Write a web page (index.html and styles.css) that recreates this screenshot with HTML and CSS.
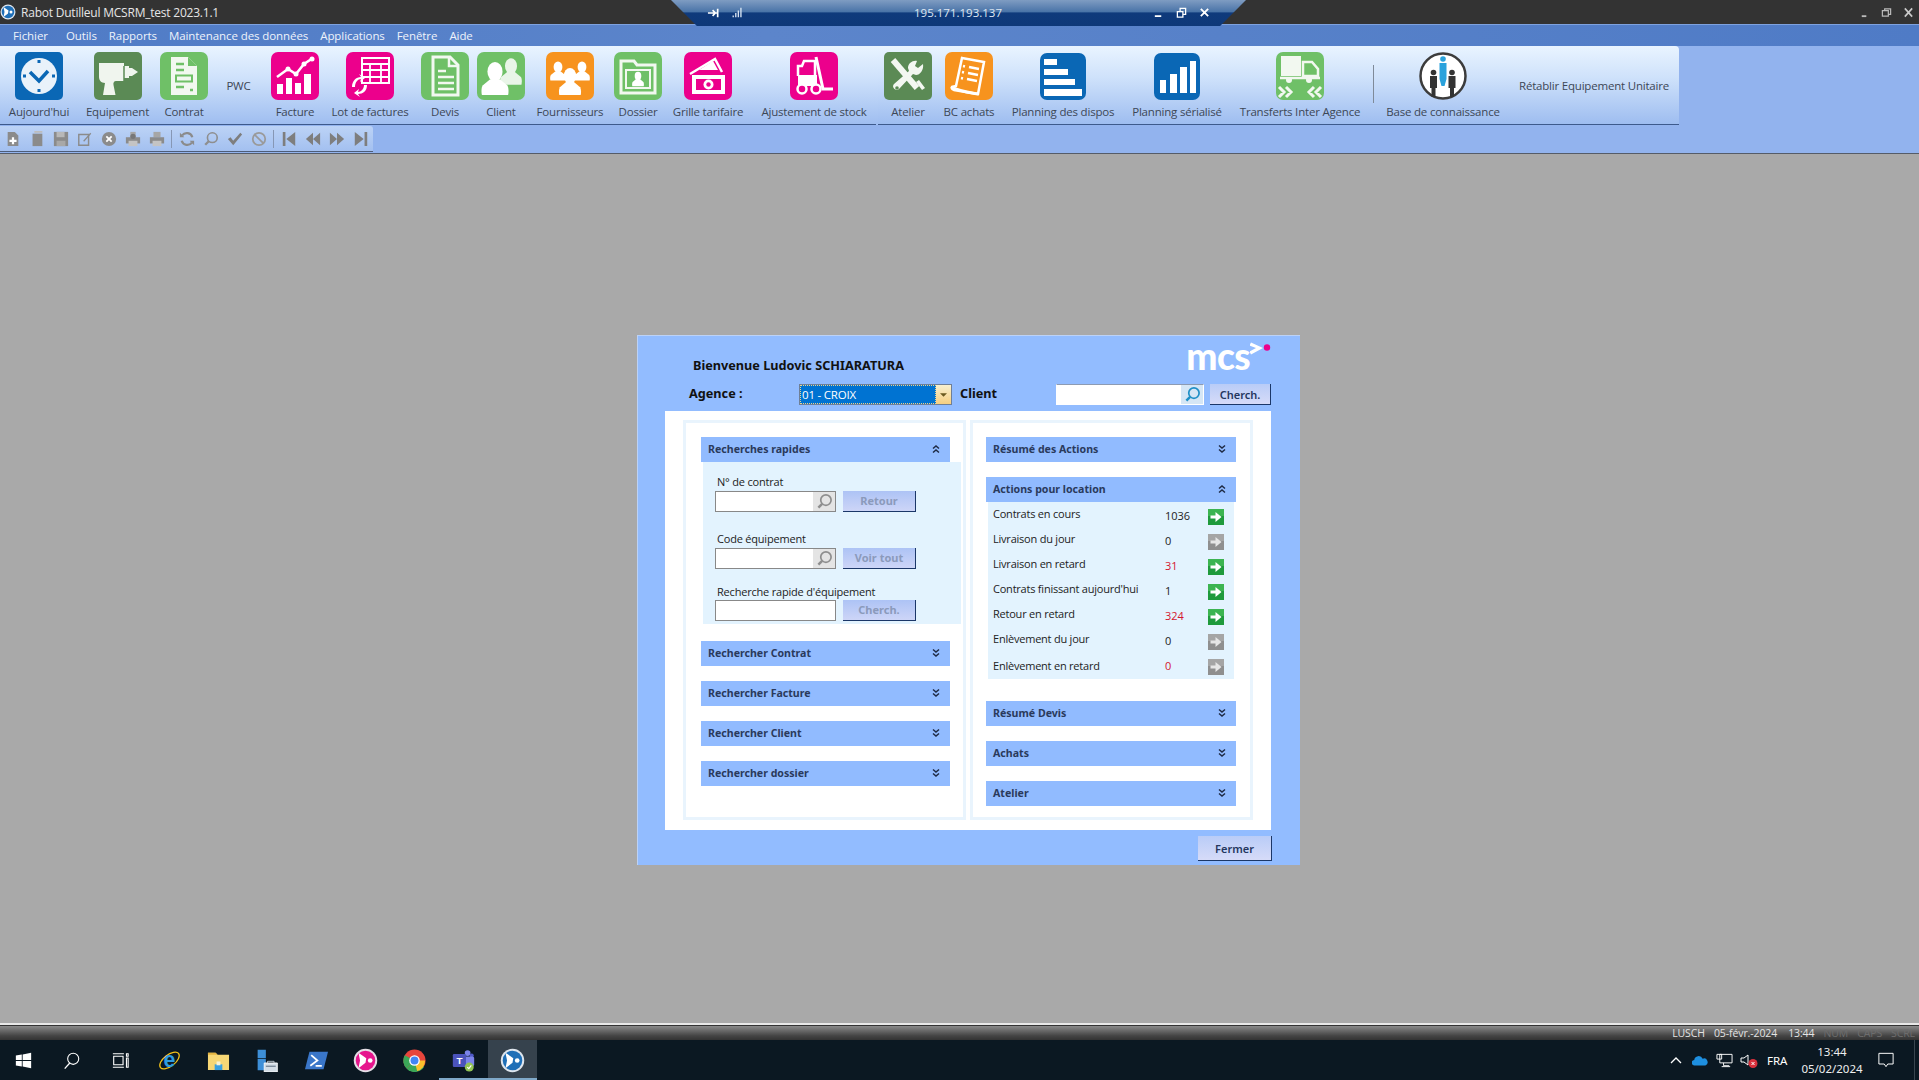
FILE: index.html
```html
<!DOCTYPE html>
<html lang="fr">
<head>
<meta charset="utf-8">
<title>Rabot Dutilleul MCSRM_test 2023.1.1</title>
<link rel="stylesheet" href="styles.css">
</head>
<body>
<svg class="defs" aria-hidden="true">
  <symbol id="chev-down" viewBox="0 0 10 10"><path d="M2 1.500 5 4l3-2.500M2 5.500 5 8l3-2.500" fill="none" stroke="#1e2a44" stroke-width="1.500"/></symbol>
  <symbol id="chev-up" viewBox="0 0 10 10"><path d="M2 4.500 5 2l3 2.500M2 8.500 5 6l3 2.500" fill="none" stroke="#1e2a44" stroke-width="1.500"/></symbol>
  <symbol id="arrow-on" viewBox="0 0 16 16"><rect width="16" height="16" fill="#1f9a3c"/><rect width="16" height="7" fill="#3cb451"/><path d="M2.500 6.500h5V3l6 5-6 5V9.500h-5z" fill="#fff"/></symbol>
  <symbol id="arrow-off" viewBox="0 0 16 16"><rect width="16" height="16" fill="#8f8f8f"/><rect width="16" height="7" fill="#a5a5a5"/><path d="M2.500 6.500h5V3l6 5-6 5V9.500h-5z" fill="#e6e6e6"/></symbol>
  <symbol id="lens-grey" viewBox="0 0 18 18"><circle cx="10.500" cy="7.500" r="5.500" fill="none" stroke="#8e8e8e" stroke-width="1.800"/><path d="M6.500 11.500 2.500 15.500" stroke="#8e8e8e" stroke-width="2.600"/></symbol>
  <symbol id="lens-blue" viewBox="0 0 18 18"><circle cx="10.500" cy="7.500" r="5.500" fill="none" stroke="#1f8fc6" stroke-width="1.800"/><path d="M6.500 11.500 2.500 15.500" stroke="#1f8fc6" stroke-width="2.600"/></symbol>
  <symbol id="bust" viewBox="0 0 20 24"><ellipse cx="10" cy="7" rx="5.500" ry="7" fill="#fff"/><path d="M6.500 12.500 1 17c-1 1.500-1 5-.5 7h19c.5-2 .5-5.500-.5-7l-5.500-4.500z" fill="#fff"/></symbol>
  <symbol id="mcs-mark" viewBox="0 0 32 32"><circle cx="16" cy="16" r="15" fill="#dfe6ee"/><circle cx="16" cy="16" r="12.500" fill="#1f6fb7"/><path d="M7 6 17 13l-1 6-9 7 2-10z" fill="#fff"/><circle cx="22" cy="16" r="3" fill="#fff"/></symbol>
  <symbol id="mcs-pink" viewBox="0 0 32 32"><circle cx="16" cy="16" r="15" fill="#e5dfe6"/><circle cx="16" cy="16" r="12.500" fill="#e6168d"/><path d="M7 6 17 13l-1 6-9 7 2-10z" fill="#fff"/><circle cx="22" cy="16" r="3" fill="#fff"/></symbol>
</svg>

<div class="app">
  <header class="titlebar">
    <div class="title-left">
      <svg class="app-logo" viewBox="0 0 32 32"><use href="#mcs-mark"/></svg>
      <span>Rabot Dutilleul MCSRM_test 2023.1.1</span>
    </div>
    <div class="win-controls">
      <svg viewBox="0 0 12 12"><path d="M3 10h5" stroke="#bbb" stroke-width="2"/></svg>
      <svg viewBox="0 0 12 12"><path d="M1.500 4h6.500v6H1.500zM4 4V2h6.500v6H8" fill="none" stroke="#bbb" stroke-width="1.300"/></svg>
      <svg viewBox="0 0 12 12"><path d="M2 1.500l8 9M10 1.500l-8 9" stroke="#c9c9c9" stroke-width="1.800"/></svg>
    </div>
  </header>

  <div class="remote-bar">
    <div class="remote-pin">
      <svg viewBox="0 0 14 12"><path d="M1 6h11M11.500 1.500v9M6 3 9 6 6 9" fill="none" stroke="#fff" stroke-width="1.800"/></svg>
      <svg viewBox="0 0 14 14"><path d="M2 12v-2M5 12V7M8 12V4M11 12V1" stroke="#d7e3f2" stroke-width="1.600"/></svg>
    </div>
    <span class="remote-ip">195.171.193.137</span>
    <div class="remote-ctrl">
      <svg viewBox="0 0 12 12"><path d="M2 10h7" stroke="#fff" stroke-width="2"/></svg>
      <svg viewBox="0 0 12 12"><path d="M1.500 5h6v6h-6zM4.500 5V1.500h6V8H8" fill="none" stroke="#fff" stroke-width="1.400"/></svg>
      <svg viewBox="0 0 12 12"><path d="M2 2l8 8M10 2l-8 8" stroke="#fff" stroke-width="2"/></svg>
    </div>
  </div>

  <nav class="menubar">
    <span class="menu-file">Fichier</span><span>Outils</span><span>Rapports</span><span>Maintenance des données</span><span>Applications</span><span>Fenêtre</span><span>Aide</span>
  </nav>

  <div class="ribbon">
    <div class="ribbon-group group-a">
      <div class="rb-item"><svg class="rb-icon" viewBox="0 0 48 48"><rect width="48" height="48" rx="5" fill="#0a67b5"/><circle cx="24" cy="24" r="18" fill="#e9f2fa"/><path d="M15 20l9 9 9-10" fill="none" stroke="#0a67b5" stroke-width="3.500"/><path d="M24 8v3M24 37v3M8 24h3M37 24h3" stroke="#0a67b5" stroke-width="3"/></svg><span>Aujourd'hui</span></div>
      <div class="rb-item"><svg class="rb-icon" viewBox="0 0 48 48"><rect width="48" height="48" rx="5" fill="#5b8a55"/><path d="M5 11h25v3h5v2h3l6 4-6 4h-3v2h-5v3H22c-2 0-3 2-2.500 4l2 10H9l2-12c-4 0-6-3-6-6z" fill="#f0f5ee"/><path d="M30 14v15" stroke="#5b8a55" stroke-width="1.500"/></svg><span>Equipement</span></div>
      <div class="rb-item"><svg class="rb-icon" viewBox="0 0 48 48"><rect width="48" height="48" rx="7" fill="#6fc067"/><path d="M11 5h17l9 9v29H11z" fill="#f2f8f0"/><path d="M28 5v9h9" fill="#6fc067"/><path d="M16 12h8M16 18h8M16 35h8M30 38h3" stroke="#6fc067" stroke-width="2.500"/><rect x="16" y="23.500" width="16" height="6" fill="none" stroke="#6fc067" stroke-width="2"/></svg><span>Contrat</span></div>
      <div class="rb-text">PWC</div>
      <div class="rb-item"><svg class="rb-icon" viewBox="0 0 48 48"><rect width="48" height="48" rx="7" fill="#ec008c"/><path d="M6 25l11-8 8 5 8-10 9-6" fill="none" stroke="#fff" stroke-width="2.500"/><circle cx="17" cy="17" r="2.500" fill="#fff"/><circle cx="25" cy="22" r="2.500" fill="#fff"/><circle cx="33" cy="12" r="2.500" fill="#fff"/><circle cx="41" cy="7" r="2.500" fill="#fff"/><path d="M6 32h6v10H6zM15 26h6v16h-6zM24 31h6v11h-6zM33 22h7v20h-7z" fill="#fff"/></svg><span>Facture</span></div>
      <div class="rb-item"><svg class="rb-icon" viewBox="0 0 48 48"><rect width="48" height="48" rx="7" fill="#ec008c"/><rect x="16" y="6" width="27" height="25" fill="none" stroke="#fff" stroke-width="2"/><path d="M16 12h27M16 18h27M16 25h27M24 12v19M35 12v19" stroke="#fff" stroke-width="1.800"/><path d="M6 35c0-6 4-10 9-10l-2-3 6 4-5 4 1-3c-3 0-6 3-6 8zM21 33c0 6-4 9-9 9l2 3-6-4 5-4-1 3c3 0 6-3 6-7z" fill="#fff"/></svg><span>Lot de factures</span></div>
      <div class="rb-item"><svg class="rb-icon" viewBox="0 0 48 48"><rect width="48" height="48" rx="7" fill="#6fc067"/><path d="M12 5h17l8 8v30H12z" fill="none" stroke="#f2f8f0" stroke-width="3"/><path d="M28 5v9h9" fill="none" stroke="#f2f8f0" stroke-width="2.500"/><path d="M17 19h8M17 25h16M17 31h16M17 37h16" stroke="#f2f8f0" stroke-width="2.500"/></svg><span>Devis</span></div>
      <div class="rb-item"><svg class="rb-icon" viewBox="0 0 48 48"><rect width="48" height="48" rx="7" fill="#6fc067"/><use href="#bust" x="23" y="6" width="22" height="27" opacity=".85"/><use href="#bust" x="4" y="10" width="28" height="33"/></svg><span>Client</span></div>
      <div class="rb-item"><svg class="rb-icon" viewBox="0 0 48 48"><rect width="48" height="48" rx="7" fill="#f7931e"/><use href="#bust" x="4" y="8" width="16" height="22"/><use href="#bust" x="28" y="8" width="16" height="22"/><use href="#bust" x="12" y="16" width="24" height="27"/></svg><span>Fournisseurs</span></div>
      <div class="rb-item"><svg class="rb-icon" viewBox="0 0 48 48"><rect width="48" height="48" rx="7" fill="#6fc067"/><path d="M7 9h13l3 4h18v28H7z" fill="none" stroke="#f2f8f0" stroke-width="3"/><path d="M12 18h24v18H12z" fill="none" stroke="#f2f8f0" stroke-width="2"/><use href="#bust" x="18" y="19" width="12" height="16"/></svg><span>Dossier</span></div>
      <div class="rb-item"><svg class="rb-icon" viewBox="0 0 48 48"><rect width="48" height="48" rx="7" fill="#ec008c"/><path d="M6 22 31 7l7 13" fill="none" stroke="#fff" stroke-width="2.500"/><path d="M15 18l14-9 5 9z" fill="#fff"/><rect x="8" y="23" width="33" height="19" fill="#fff"/><rect x="12" y="27" width="25" height="11" fill="#ec008c"/><circle cx="24.500" cy="32.500" r="5" fill="#fff"/><circle cx="24.500" cy="32.500" r="2.200" fill="#ec008c"/></svg><span>Grille tarifaire</span></div>
      <div class="rb-item"><svg class="rb-icon" viewBox="0 0 48 48"><rect width="48" height="48" rx="7" fill="#ec008c"/><path d="M8 24V14h4l2-5h11v15" fill="none" stroke="#fff" stroke-width="2.500"/><path d="M8 23h19v11H8z" fill="#fff"/><path d="M26 5 33 37h10" fill="none" stroke="#fff" stroke-width="3"/><circle cx="12" cy="37" r="4.500" fill="#ec008c" stroke="#fff" stroke-width="2.500"/><circle cx="26" cy="37" r="4.500" fill="#ec008c" stroke="#fff" stroke-width="2.500"/></svg><span>Ajustement de stock</span></div>
    </div>
    <div class="ribbon-group group-b">
      <div class="rb-item"><svg class="rb-icon" viewBox="0 0 48 48"><rect width="48" height="48" rx="5" fill="#5b8a55"/><path d="M9 8 33 36" stroke="#f3f7f1" stroke-width="6"/><path d="M38 38l-6-8 3-2 6 8z" fill="#f3f7f1"/><path d="M39 12l-5 4-3-2 2-5c-4-1-9 2-9 7l1 3-15 13c-3 3 2 8 5 5l14-15 3 1c4 0 8-5 7-11z" fill="#f3f7f1"/><circle cx="13" cy="36" r="1.800" fill="#5b8a55"/></svg><span>Atelier</span></div>
      <div class="rb-item"><svg class="rb-icon" viewBox="0 0 48 48"><rect width="48" height="48" rx="7" fill="#f7931e"/><path d="M17 6l22 4-6 32-24-4c-2-1-3-2-2-3l4-1z" fill="none" stroke="#fff" stroke-width="2.500"/><path d="M7 35c6 4 14 5 26 7" fill="none" stroke="#fff" stroke-width="3"/><path d="M24 15l10 2M23 21l10 2M22 27l10 2" stroke="#fff" stroke-width="2.500"/><path d="M18 14l2 .5M17 20l2 .5M16 26l2 .5" stroke="#fff" stroke-width="2.500"/></svg><span>BC achats</span></div>
      <div class="rb-item"><svg class="rb-icon rb-round" viewBox="0 0 46 47"><rect width="46" height="47" rx="7" fill="#0a67b5"/><path d="M4 6h13v6H4zM4 16h24v6H4zM4 26h31v6H4zM4 36h38v7H4z" fill="#fff"/></svg><span>Planning des dispos</span></div>
      <div class="rb-item"><svg class="rb-icon rb-round" viewBox="0 0 46 47"><rect width="46" height="47" rx="7" fill="#0a67b5"/><path d="M6 27h6v13H6zM16 21h7v19h-7zM26 14h7v26h-7zM36 8h6v32h-6z" fill="#fff"/></svg><span>Planning sérialisé</span></div>
      <div class="rb-item"><svg class="rb-icon" viewBox="0 0 48 48"><rect width="48" height="48" rx="7" fill="#6fc067"/><path d="M5 4h20v20H5z" fill="#f2f8f0"/><path d="M27 10h9l6 7v7H27z" fill="none" stroke="#f2f8f0" stroke-width="2.500"/><path d="M4 26h40" stroke="#f2f8f0" stroke-width="2.500"/><circle cx="13" cy="28" r="3" fill="#f2f8f0"/><circle cx="33" cy="28" r="3" fill="#f2f8f0"/><path d="M3 35l5 5-5 5M10 35l5 5-5 5M45 35l-5 5 5 5M38 35l-5 5 5 5" fill="none" stroke="#f2f8f0" stroke-width="3"/></svg><span>Transferts Inter Agence</span></div>
      <div class="rb-sep"></div>
      <div class="rb-item"><svg class="rb-icon" viewBox="0 0 48 48"><circle cx="24" cy="24" r="22.500" fill="#fff" stroke="#3c3c3c" stroke-width="2.500"/><circle cx="24" cy="7" r="2.800" fill="#2aa2dc"/><path d="M20.500 11h7v16l-2 7h-3l-2-7z" fill="#2aa2dc"/><circle cx="14.500" cy="20.500" r="2.800" fill="#333"/><path d="M11 24h7v12h-1.500v9h-4v-9H11z" fill="#333"/><circle cx="33" cy="20.500" r="2.800" fill="#333"/><path d="M29.500 24h7v12H35v9h-4v-9h-1.500z" fill="#333"/></svg><span>Base de connaissance</span></div>
      <div class="rb-text">Rétablir Equipement Unitaire</div>
    </div>
  </div>

  <div class="toolstrip">
    <div class="toolbar">
      <svg viewBox="0 0 18 18"><path d="M3 1h8l4 4v12H3z" fill="#8b8b8b"/><path d="M9 7v8M5 11h8" stroke="#fff" stroke-width="2.500"/></svg>
      <svg viewBox="0 0 18 18"><path d="M4 3h11v14H4z" fill="#8b8b8b"/><path d="M6 1h9" stroke="#bdbdbd" stroke-width="2"/></svg>
      <svg viewBox="0 0 18 18"><path d="M1 1h16v16H1z" fill="#8b8b8b"/><path d="M4 1h9v6H4z" fill="#b8b8b8"/><path d="M4 11h10v6H4z" fill="#a8a8a8"/></svg>
      <svg viewBox="0 0 18 18"><path d="M2 4h11v12H2z" fill="none" stroke="#8b8b8b" stroke-width="1.600"/><path d="M7 11l1 1 8-9-1-1z" fill="#8b8b8b"/></svg>
      <svg viewBox="0 0 18 18"><circle cx="9" cy="9" r="8" fill="#8b8b8b"/><path d="M6 6l6 6M12 6l-6 6" stroke="#fff" stroke-width="2"/></svg>
      <svg viewBox="0 0 18 18"><path d="M6 1h6v6H6z" fill="#a6a6a6"/><path d="M1 7h16v7H1z" fill="#8b8b8b"/><path d="M4 11h10v6H4z" fill="#c4c4c4"/><circle cx="9" cy="6" r="3" fill="#777"/></svg>
      <svg viewBox="0 0 18 18"><path d="M5 1h8v6H5z" fill="#a6a6a6"/><path d="M1 7h16v7H1z" fill="#8b8b8b"/><path d="M4 11h10v6H4z" fill="#c4c4c4"/></svg>
      <i class="tb-sep"></i>
      <svg viewBox="0 0 18 18"><path d="M15 7A6.500 6.500 0 0 0 3.500 5M3 11a6.500 6.500 0 0 0 11.500 2" fill="none" stroke="#8b8b8b" stroke-width="2.500"/><path d="M1 2l5 5H1zM17 16l-5-5h5z" fill="#8b8b8b"/></svg>
      <svg viewBox="0 0 18 18"><use href="#lens-grey"/></svg>
      <svg viewBox="0 0 18 18"><path d="M1 9l3-2 3 4 8-9 2 2-10 12z" fill="#7e7e7e"/></svg>
      <svg viewBox="0 0 18 18"><circle cx="9" cy="9" r="7" fill="none" stroke="#9a9a9a" stroke-width="2"/><path d="M4 4l10 10" stroke="#9a9a9a" stroke-width="2"/></svg>
      <i class="tb-sep"></i>
      <svg viewBox="0 0 18 18"><path d="M2 1h3v16H2zM16 1v16L6 9z" fill="#7e7e7e"/></svg>
      <svg viewBox="0 0 18 18"><path d="M9 2v14L1 9zM17 2v14L9 9z" fill="#7e7e7e"/></svg>
      <svg viewBox="0 0 18 18"><path d="M9 2v14l8-7zM1 2v14l8-7z" fill="#7e7e7e"/></svg>
      <svg viewBox="0 0 18 18"><path d="M16 1h-3v16h3zM2 1v16l10-8z" fill="#7e7e7e"/></svg>
    </div>
  </div>

  <main class="workspace">
    <section class="dialog">
      <div class="dlg-top">
        <div class="welcome">Bienvenue Ludovic SCHIARATURA</div>
        <div class="logo">
          <span class="logo-text">mcs</span>
          <svg viewBox="0 0 26 20"><path d="M1 1.500l12 5.500-12 6.500-1.500-3L6 7-.5 4.500z" fill="#fff"/><circle cx="17" cy="6.500" r="3.200" fill="#ec008c"/></svg>
        </div>
      </div>
      <div class="dlg-search">
        <label class="dlg-label agence">Agence :</label>
        <div class="combo"><span class="combo-value">01 - CROIX</span><span class="combo-btn"><svg viewBox="0 0 8 4"><path d="M0 0h8L4 4z" fill="#6b5a20"/></svg></span></div>
        <label class="dlg-label client">Client</label>
        <div class="field field-client"><span class="field-box"></span><span class="field-lens lens-light"><svg viewBox="0 0 18 18"><use href="#lens-blue"/></svg></span></div>
        <button class="btn btn-search">Cherch.</button>
      </div>

      <div class="dlg-body">
        <div class="panel panel-left">
          <div class="sec-head"><span>Recherches rapides</span><svg viewBox="0 0 10 10"><use href="#chev-up"/></svg></div>
          <div class="sec-open quick">
            <div class="quick-label">N° de contrat</div>
            <div class="quick-row"><div class="field"><span class="field-box"></span><span class="field-lens"><svg viewBox="0 0 18 18"><use href="#lens-grey"/></svg></span></div><button class="btn btn-off">Retour</button></div>
            <div class="quick-label second">Code équipement</div>
            <div class="quick-row"><div class="field"><span class="field-box"></span><span class="field-lens"><svg viewBox="0 0 18 18"><use href="#lens-grey"/></svg></span></div><button class="btn btn-off">Voir tout</button></div>
            <div class="quick-label third">Recherche rapide d'équipement</div>
            <div class="quick-row"><div class="field"><span class="field-box"></span></div><button class="btn btn-off">Cherch.</button></div>
          </div>
          <div class="sec-head"><span>Rechercher Contrat</span><svg viewBox="0 0 10 10"><use href="#chev-down"/></svg></div>
          <div class="sec-head"><span>Rechercher Facture</span><svg viewBox="0 0 10 10"><use href="#chev-down"/></svg></div>
          <div class="sec-head"><span>Rechercher Client</span><svg viewBox="0 0 10 10"><use href="#chev-down"/></svg></div>
          <div class="sec-head"><span>Rechercher dossier</span><svg viewBox="0 0 10 10"><use href="#chev-down"/></svg></div>
        </div>

        <div class="panel panel-right">
          <div class="sec-head"><span>Résumé des Actions</span><svg viewBox="0 0 10 10"><use href="#chev-down"/></svg></div>
          <div class="sec-head"><span>Actions pour location</span><svg viewBox="0 0 10 10"><use href="#chev-up"/></svg></div>
          <div class="sec-open actions">
            <div class="act-row"><span class="act-label">Contrats en cours</span><span class="act-val">1036</span><svg viewBox="0 0 16 16"><use href="#arrow-on"/></svg></div>
            <div class="act-row"><span class="act-label">Livraison du jour</span><span class="act-val">0</span><svg viewBox="0 0 16 16"><use href="#arrow-off"/></svg></div>
            <div class="act-row"><span class="act-label">Livraison en retard</span><span class="act-val late">31</span><svg viewBox="0 0 16 16"><use href="#arrow-on"/></svg></div>
            <div class="act-row"><span class="act-label">Contrats finissant aujourd'hui</span><span class="act-val">1</span><svg viewBox="0 0 16 16"><use href="#arrow-on"/></svg></div>
            <div class="act-row"><span class="act-label">Retour en retard</span><span class="act-val late">324</span><svg viewBox="0 0 16 16"><use href="#arrow-on"/></svg></div>
            <div class="act-row"><span class="act-label">Enlèvement du jour</span><span class="act-val">0</span><svg viewBox="0 0 16 16"><use href="#arrow-off"/></svg></div>
            <div class="act-row act-low"><span class="act-label">Enlèvement en retard</span><span class="act-val late">0</span><svg viewBox="0 0 16 16"><use href="#arrow-off"/></svg></div>
          </div>
          <div class="sec-head"><span>Résumé Devis</span><svg viewBox="0 0 10 10"><use href="#chev-down"/></svg></div>
          <div class="sec-head"><span>Achats</span><svg viewBox="0 0 10 10"><use href="#chev-down"/></svg></div>
          <div class="sec-head"><span>Atelier</span><svg viewBox="0 0 10 10"><use href="#chev-down"/></svg></div>
        </div>
      </div>
      <div class="dlg-foot"><button class="btn btn-close">Fermer</button></div>
    </section>
  </main>

  <div class="statusbar"><span>LUSCH</span><span class="st-date">05-févr.-2024</span><span>13:44</span><span class="st-off">NUM</span><span class="st-off">CAPS</span><span class="st-off">SCRL</span></div>

  <footer class="taskbar">
    <div class="tk-slot tk-small"><svg viewBox="0 0 20 20"><path d="M1 4l7-1v6.500H1zM9 2.800 19 1v8.500H9zM1 10.500h7V17l-7-1zM9 10.500h10V19L9 17.200z" fill="#fff"/></svg></div>
    <div class="tk-slot tk-small"><svg viewBox="0 0 20 20"><circle cx="12" cy="8" r="6.500" fill="none" stroke="#fff" stroke-width="1.300"/><path d="M8 13 2 19.500" stroke="#fff" stroke-width="1.500"/></svg></div>
    <div class="tk-slot tk-small"><svg viewBox="0 0 20 20"><path d="M2 5h11v10H2zM1 2h13M1 18h13M17 2h2v3h-2zM17 7h2v11h-2z" fill="none" stroke="#fff" stroke-width="1.300"/></svg></div>
    <div class="tk-slot"><svg viewBox="0 0 28 28"><ellipse cx="14" cy="14" rx="14" ry="7" transform="rotate(-38 14 14)" fill="none" stroke="#f4c21a" stroke-width="1.500"/><text x="14" y="22" class="ie-e">e</text></svg></div>
    <div class="tk-slot"><svg viewBox="0 0 24 24"><path d="M1 4h8l2 2h12v16H1z" fill="#f7d775"/><path d="M1 4h8l2 2H1z" fill="#e3b341"/><path d="M8 16h8v6H8z" fill="#3aa0e0"/><path d="M10 13h4v4h-4z" fill="#f7f2d8"/></svg></div>
    <div class="tk-slot"><svg viewBox="0 0 26 28"><path d="M1 1h10v10H1zM1 12h10v14H1z" fill="#3d8fd8"/><path d="M9 17h16v11H9z" fill="#d3dde6" stroke="#fff"/><path d="M11 21h12" stroke="#6d7e8f" stroke-width="1.500"/><path d="M13 17v-2h8v2" fill="none" stroke="#cfd8e0"/></svg></div>
    <div class="tk-slot"><svg viewBox="0 0 26 24"><path d="M5 2h21l-5 20H0z" fill="#3a76c9"/><path d="M7 6l7 6-8 6M12 18h7" fill="none" stroke="#fff" stroke-width="2"/></svg></div>
    <div class="tk-slot"><svg class="tk-mark" viewBox="0 0 32 32"><use href="#mcs-pink"/></svg></div>
    <div class="tk-slot"><svg viewBox="0 0 26 26"><circle cx="13" cy="13" r="12.500" fill="#e8453c"/><path d="M13 13 24 20A12.500 12.500 0 0 1 4 22z" fill="#3aa757"/><path d="M13 13 4 22A12.500 12.500 0 0 1 2 7z" fill="#3aa757"/><path d="M13 13h12a12.500 12.500 0 0 1-9 12z" fill="#fbc02d"/><circle cx="13" cy="13" r="6" fill="#fff"/><circle cx="13" cy="13" r="4.500" fill="#4285f4"/></svg></div>
    <div class="tk-slot tk-teams"><svg viewBox="0 0 28 28"><circle cx="19" cy="5" r="3.500" fill="#7b83eb"/><circle cx="24" cy="8" r="2.500" fill="#5059c9"/><rect x="14" y="9" width="13" height="12" rx="2" fill="#7b83eb"/><rect x="1" y="6" width="16" height="16" rx="1.500" fill="#4b53bc"/><text x="9" y="18.500" class="teams-t">T</text><circle cx="21" cy="22" r="5.500" fill="#92c353"/><path d="M18.500 22l2 2 3-4" fill="none" stroke="#fff" stroke-width="1.400"/></svg></div>
    <div class="tk-slot tk-active"><svg class="tk-mark" viewBox="0 0 32 32"><use href="#mcs-mark"/></svg></div>
    <div class="tray">
      <svg class="tr-chev" viewBox="0 0 12 8"><path d="M1 7l5-5 5 5" fill="none" stroke="#fff" stroke-width="1.300"/></svg>
      <svg class="tr-cloud" viewBox="0 0 18 11"><path d="M3 11a3 3 0 0 1-.5-6A5 5 0 0 1 12 3.500 4 4 0 0 1 15 11z" fill="#1e8fe0"/></svg>
      <svg class="tr-net" viewBox="0 0 18 15"><path d="M4 1h13v9H4zM1 1h5v5H1zM8 10v3h6M6 14h9" fill="none" stroke="#fff" stroke-width="1"/></svg>
      <svg class="tr-vol" viewBox="0 0 18 15"><path d="M1 5h3l4-3v10L4 9H1z" fill="none" stroke="#fff" stroke-width="1"/><circle cx="13" cy="10.500" r="4.500" fill="#d8303c"/><path d="M11.500 9l3 3M14.500 9l-3 3" stroke="#fff"/></svg>
      <span class="tr-lang">FRA</span>
      <div class="tr-clock"><span>13:44</span><span>05/02/2024</span></div>
      <svg class="tr-notif" viewBox="0 0 18 17"><path d="M1 1h16v12h-6l-2 3-2-3H1z" fill="none" stroke="#fff" stroke-width="1.100"/></svg>
    </div>
  </footer>
</div>
</body>
</html>
```

FILE: styles.css
```css
* { box-sizing: border-box; }
html, body { margin: 0; padding: 0; }
body { width: 1919px; height: 1080px; overflow: hidden; font-family: "Open Sans", "Noto Sans", sans-serif; color: #222; }
.defs { position: absolute; width: 0; height: 0; }
svg { display: block; }

.app { position: relative; display: flex; flex-direction: column; height: 1080px; }

/* title bar */
.titlebar { height: 25px; flex: none; display: flex; justify-content: space-between; align-items: center; background: #333; border-bottom: 1px solid #7ea2df; color: #e6e6e6; }
.title-left { display: flex; align-items: center; gap: 5px; font-size: 12px; letter-spacing: -.22px; }
.app-logo { width: 16px; height: 16px; }
.win-controls { display: flex; align-items: center; gap: 11px; padding-right: 5px; }
.win-controls svg { width: 11px; height: 11px; }

.remote-bar { position: absolute; left: 671px; top: 0; width: 575px; height: 26px; display: flex; align-items: center; clip-path: polygon(0 0, 100% 0, 95.500% 100%, 4.500% 100%); background: linear-gradient(#7f9cc2 0, #4a74a8 45%, #0f3a7c 50%, #0e3878 100%); color: #dfe7f2; font-size: 11.500px; }
.remote-pin { position: absolute; left: 32px; top: 5px; width: 50px; height: 16px; display: flex; gap: 11px; align-items: center; padding-left: 4px; }
.remote-pin svg { width: 13px; height: 12px; }
.remote-ip { position: absolute; left: 287px; top: 5px; width: 0; white-space: nowrap; display: flex; justify-content: center; }
.remote-ctrl { position: absolute; left: 482px; top: 7px; display: flex; gap: 12px; }
.remote-ctrl svg { width: 11px; height: 11px; }

/* menu */
.menubar { height: 21px; flex: none; display: flex; align-items: center; gap: 12px; padding-left: 13px; background: linear-gradient(90deg, #4f7bc6, #5c85cb 40%, #4f7bc6); color: #eef3fb; font-size: 11.500px; letter-spacing: -.08px; }
.menu-file { margin-right: 6px; }

/* ribbon */
.ribbon { flex: none; height: 79px; display: flex; background: #92b3ee; width: 1919px; }
.ribbon-group { height: 79px; display: grid; align-items: start; padding-top: 6px; background: linear-gradient(#e9f4ff, #cfe2fb 40%, #9ebdf0); }
.group-a { width: 878px; grid-template-columns: 78px 79px 54px 55px 58px 92px 58px 54px 84px 52px 88px 124px; background: linear-gradient(#3d5a8c, #3d5a8c) 0 100% / 876px 1px no-repeat, linear-gradient(#e9f4ff, #cfe2fb 40%, #9ebdf0); }
.group-b { width: 801px; border-bottom: 1px solid #3d5a8c; border-radius: 0 4px 0 0; grid-template-columns: 60px 62px 126px 102px 144px 3px 136px 166px; }
.rb-item { display: flex; flex-direction: column; align-items: center; color: #3d4756; font-size: 11.500px; letter-spacing: -.2px; white-space: nowrap; }
.rb-icon { width: 48px; height: 48px; }
.rb-round { width: 46px; height: 47px; margin: 1px 0 0; }
.rb-item span { line-height: 16px; margin-top: 4px; }
.rb-text { margin-top: 26px; line-height: 16px; text-align: center; color: #3d4756; font-size: 11.500px; letter-spacing: -.2px; white-space: nowrap; }
.rb-sep { width: 1px; height: 38px; margin: 13px 0 0 1px; background: #7f8a99; }

/* toolbar */
.toolstrip { flex: none; height: 29px; background: #92b3ee; padding-top: 1px; border-bottom: 1px solid #555c68; }
.toolbar { width: 373px; height: 26px; padding-left: 5px; display: flex; align-items: center; gap: 5px; background: linear-gradient(#bcd3f6, #a3c0f0); border-bottom: 1px solid #4e5d78; border-radius: 0 3px 0 0; }
.toolbar svg { width: 16px; height: 16px; margin-right: 3px; }
.tb-sep { width: 1px; height: 18px; background: #8697b5; margin: 0 2px 0 -2px; }

/* workspace */
.workspace { flex: 1 1 auto; min-height: 0; background: #a9a9a9; padding: 181px 0 0 637px; border-bottom: 2px solid #e8e8e8; }
.dialog { width: 663px; height: 530px; background: #92bcff; border-top: 1px solid #bcd2f7; border-left: 1px solid #bcd2f7; }
.dlg-top { height: 48px; display: flex; justify-content: space-between; padding: 0 24px 0 55px; }
.welcome { padding-top: 20px; line-height: 18px; font-size: 12.700px; font-weight: 700; color: #111; font-family: "Noto Sans", sans-serif; }
.logo { display: flex; align-items: flex-start; padding-top: 5px; }
.logo-text { font-family: Lato, sans-serif; font-weight: 900; font-size: 37px; line-height: 30px; color: #fff; letter-spacing: -.6px; }
.logo svg { width: 26px; height: 20px; margin-left: 0; }
.dlg-search { height: 27px; display: flex; align-items: flex-start; padding-left: 51px; }
.dlg-label { width: 110px; line-height: 19px; font-size: 12.700px; font-weight: 700; color: #111; font-family: "Noto Sans", sans-serif; }
.dlg-label.client { width: 96px; margin-left: 8px; }
.combo { width: 153px; height: 21px; display: flex; border: 1px solid #6f7f96; background: #fff; }
.combo-value { flex: 1; outline: 1px dotted #e9d28f; outline-offset: -1px; padding-left: 2px; line-height: 19px; background: #0073d2; color: #fff; font-size: 11.500px; letter-spacing: -.2px; }
.combo-btn { width: 15px; display: flex; align-items: center; justify-content: center; background: linear-gradient(#f8f0d0, #f7cf80); }
.combo-btn svg { width: 7px; height: 4px; }
.field { width: 121px; height: 21px; display: flex; flex: none; border: 1px solid #888; background: #fff; }
.field-box { flex: 1; }
.field-lens { width: 22px; display: flex; align-items: center; justify-content: center; background: #e4e4e4; }
.field-lens svg { width: 17px; height: 17px; }
.field-client { width: 148px; border-color: #fff; border-top-color: #8d9bb2; }
.lens-light { background: #d5e6f5; }
.btn { display: block; padding: 0 0 2px; height: 21px; font-family: "Noto Sans", sans-serif; font-size: 11px; font-weight: 600; border: 0; border-right: 1px solid #1b3768; border-bottom: 1px solid #1b3768; background: linear-gradient(#b9ccf7, #d6dbf8); color: #24375f; }
.btn-search { width: 61px; margin-left: 6px; padding-bottom: 0; }
.btn-off { width: 73px; margin-left: 7px; color: #8b9abb; background: linear-gradient(#adc3f5, #cdd5f7); font-weight: 700; }
.btn-close { width: 74px; height: 25px; padding-bottom: 0; }

.dlg-body { width: 606px; height: 419px; margin-left: 27px; padding: 9px 18px 10px; background: #fff; display: grid; grid-template-columns: 283px 283px; column-gap: 4px; }
.panel { border: 3px solid #e9f4fd; padding-top: 14px; height: 400px; }
.panel-left { padding-left: 15px; }
.panel-right { padding-left: 13px; }
.sec-head { width: 249px; height: 25px; margin-bottom: 15px; padding: 0 9px 2px 7px; display: flex; align-items: center; justify-content: space-between; background: #91bbff; color: #2a3a5c; font-family: "Noto Sans", sans-serif; font-size: 10.600px; font-weight: 700; }
.panel-right .sec-head { width: 250px; }
.sec-head svg { width: 10px; height: 10px; }
.sec-head:has(+ .sec-open) { margin-bottom: 0; }
.sec-open { margin: 0 2px; background: #e3f3fe; }
.quick { height: 162px; margin-bottom: 17px; padding: 12px 0 0 12px; }
.quick-label { height: 17px; line-height: 16px; padding-left: 2px; font-size: 11px; letter-spacing: -.2px; color: #222; }
.quick-label.second { margin-top: 19px; }
.quick-label.third { height: 16px; margin-top: 15px; }
.quick-row { display: flex; }
.actions { height: 177px; width: 246px; margin-bottom: 22px; padding: 3px 0 0 5px; }
.act-row { height: 25px; display: grid; grid-template-columns: 172px 43px 16px; align-items: start; font-size: 11px; color: #222; }
.act-row svg { width: 16px; height: 16px; margin-top: 4px; }
.act-label { padding-top: 1px; line-height: 16px; letter-spacing: -.22px; white-space: nowrap; }
.act-low .act-label { padding-top: 3px; }
.act-val { padding-top: 3px; line-height: 16px; }
.late { color: #d4162e; }

.dlg-foot { display: flex; justify-content: flex-end; padding: 6px 28px 0 0; }

/* status */
.statusbar { flex: none; height: 15px; display: flex; justify-content: flex-end; gap: 9px; padding-right: 4px; background: linear-gradient(#8a8a8a, #444 70%, #333); border-top: 1px solid #333; color: #e3e3e3; font-size: 10.500px; line-height: 15px; letter-spacing: -.1px; white-space: nowrap; }
.st-date { margin-right: 2px; }
.st-off { color: #6d6d6d; }

/* taskbar */
.taskbar { flex: none; height: 40px; display: flex; background: #0b1822; }
.tk-slot { width: 49px; height: 40px; display: flex; align-items: center; justify-content: center; }
.tk-slot:first-child { width: 47px; }
.tk-slot svg { width: 23px; height: 23px; }
.tk-slot.tk-small svg { width: 17px; height: 17px; }
.tk-slot .tk-mark { width: 25px; height: 25px; }
.tk-teams { box-shadow: inset 0 -2px 0 #7fa8c8; }
.tk-active { background: #36424d; box-shadow: inset 0 -2px 0 #7fa8c8; }
.ie-e { font-family: "Liberation Sans", sans-serif; font-size: 26px; font-weight: 700; fill: #2f9be0; text-anchor: middle; }
.teams-t { font-family: "Liberation Sans", sans-serif; font-size: 12px; font-weight: 700; fill: #fff; text-anchor: middle; }
.tray { margin-left: auto; width: 253px; display: flex; align-items: center; padding-left: 1px; color: #fff; border-right: 1px solid #3a4650; margin-right: 4px; }
.tr-chev { width: 12px; height: 8px; margin-left: 7px; }
.tr-cloud { width: 16px; height: 11px; margin-left: 10px; }
.tr-net { width: 17px; height: 15px; margin-left: 8px; }
.tr-vol { width: 18px; height: 15px; margin-left: 7px; }
.tr-lang { font-size: 11.500px; margin-left: 9px; font-family: "Noto Sans", sans-serif; }
.tr-clock { display: flex; flex-direction: column; align-items: center; gap: 2px; width: 65px; margin-left: 12px; font-size: 11.500px; line-height: 15px; color: #eee; font-family: "Noto Sans", sans-serif; }
.tr-notif { width: 16px; height: 16px; margin-left: 14px; }
```
